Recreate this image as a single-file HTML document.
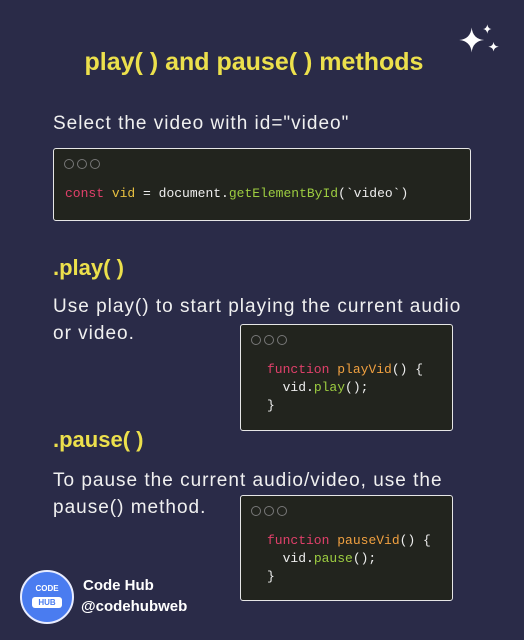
<!DOCTYPE html>
<html><head><style>
body{margin:0;width:524px;height:640px;background:#2a2b48;font-family:"Liberation Sans",sans-serif;position:relative;overflow:hidden;color:#eee}
.a{position:absolute;white-space:nowrap}
.t{color:#ece04c;font-weight:bold}
.p{font-size:19px;color:#f0f0f0;letter-spacing:1px}
.box{position:absolute;background:#22241e;border:1.5px solid #e6e6e6;border-radius:3px;font-family:"Liberation Mono",monospace;font-size:13px;color:#eee}
.dots{position:absolute;left:10px;top:9px}
.dots i{display:inline-block;width:8px;height:8px;border:1px solid #777;border-radius:50%;margin-right:3px}
.k{color:#e0406a}.f{color:#f0a040}.g{color:#9ccc40}.v{color:#e8c040}
</style></head><body>
<svg class="a" style="left:455px;top:22px" width="50" height="38" viewBox="0 0 48 34">
<path d="M16 4 Q17 15 28 16 Q17 17 16 28 Q15 17 4 16 Q15 15 16 4Z" fill="#fff"/>
<path d="M31 1 Q31.5 5 35 5.5 Q31.5 6 31 10 Q30.5 6 27 5.5 Q30.5 5 31 1Z" fill="#fff"/>
<path d="M37 18 Q37.5 22 42 22.5 Q37.5 23 37 27 Q36.5 23 32 22.5 Q36.5 22 37 18Z" fill="#fff"/>
</svg>
<div class="a t" style="left:0;width:508px;text-align:center;top:48px;font-size:25px">play( ) and pause( ) methods</div>
<div class="a p" style="left:53px;top:113px">Select the video with id="video"</div>
<div class="box" style="left:53px;top:148px;width:416px;height:71px">
<div class="dots"><i></i><i></i><i></i></div>
<div class="a" style="left:11px;top:37px"><span class="k">const</span> <span class="v">vid</span> = document.<span class="g">getElementById</span>(`video`)</div></div>
<div class="a t" style="left:53px;top:255px;font-size:22px">.play( )</div>
<div class="a p" style="left:53px;top:293px;line-height:27px">Use play() to start playing the current audio<br>or video.</div>
<div class="box" style="left:240px;top:324px;width:211px;height:105px">
<div class="dots"><i></i><i></i><i></i></div>
<div class="a" style="left:26px;top:36px;line-height:18px"><span class="k">function</span> <span class="f">playVid</span>() {<br>&nbsp;&nbsp;vid.<span class="g">play</span>();<br>}</div></div>
<div class="a t" style="left:53px;top:427px;font-size:22px">.pause( )</div>
<div class="a p" style="left:53px;top:467px;line-height:27px">To pause the current audio/video, use the<br>pause() method.</div>
<div class="box" style="left:240px;top:495px;width:211px;height:104px">
<div class="dots"><i></i><i></i><i></i></div>
<div class="a" style="left:26px;top:36px;line-height:18px"><span class="k">function</span> <span class="f">pauseVid</span>() {<br>&nbsp;&nbsp;vid.<span class="g">pause</span>();<br>}</div></div>
<div class="a" style="left:20px;top:570px;width:50px;height:50px;border-radius:50%;background:#4a7cf0;border:2px solid #e8ecff"></div>
<div class="a" style="left:20px;top:584px;width:54px;text-align:center;font-size:8px;font-weight:bold;color:#fff">CODE</div>
<div class="a" style="left:30px;top:597px;width:30px;height:11px;background:#fff;border-radius:3px;text-align:center;font-size:8px;font-weight:bold;color:#4a7cf0;line-height:11px;margin-left:2px">HUB</div>
<div class="a" style="left:83px;top:577px;font-size:15px;font-weight:bold;color:#fff">Code Hub</div>
<div class="a" style="left:81px;top:598px;font-size:15px;font-weight:bold;color:#fff">@codehubweb</div>
</body></html>
